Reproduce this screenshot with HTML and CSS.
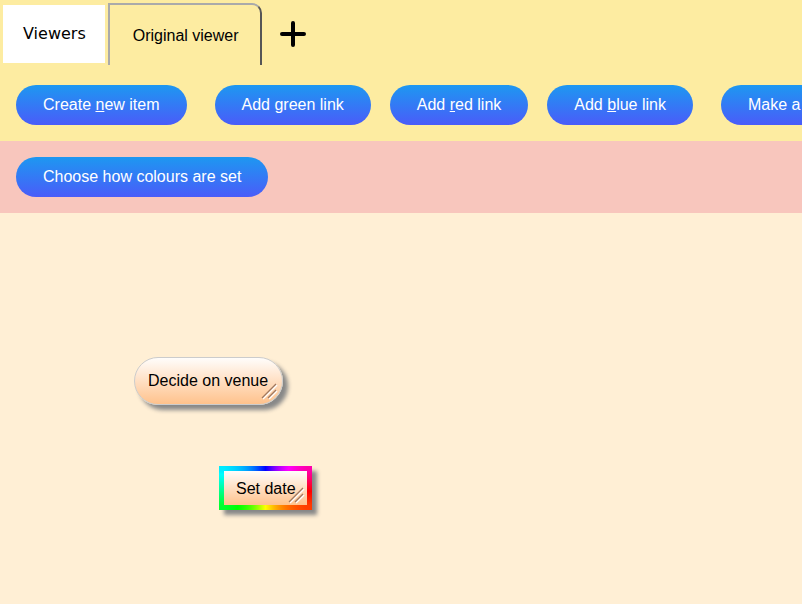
FILE: index.html
```html
<!DOCTYPE html>
<html lang="en">
<head>
    <meta charset="UTF-8">
    <title>Viewers</title>
    <link rel="stylesheet" href="styles.css">
</head>
<body>
    <div class="toolbar">
        <div class="tabs">
            <div class="tab-label">Viewers</div>
            <div class="tab active">Original viewer</div>
            <div class="tab-add">
                <svg width="30" height="30" viewBox="0 0 30 30">
                    <path d="M15 4 V26 M4 15 H26" stroke="#000" stroke-width="4" stroke-linecap="round"/>
                </svg>
            </div>
        </div>
        <div class="button-row">
            <button class="btn first">Create <u>n</u>ew item</button>
            <button class="btn">Add green link</button>
            <button class="btn">Add <u>r</u>ed link</button>
            <button class="btn group-end">Add <u>b</u>lue link</button>
            <button class="btn">Make a copy</button>
        </div>
    </div>
    <div class="colour-bar">
        <button class="btn">Choose how colours are set</button>
    </div>
    <div class="canvas">
        <div class="node pill" style="left: 134px; top: 144px;">
            Decide on venue
            <svg class="grip" width="17" height="17" viewBox="0 0 17 17">
                <path d="M2 16 L16 2 M8 16 L16 8" stroke="#fff" stroke-width="1.5"/>
                <path d="M1 15 L15 1 M7 15 L15 7" stroke="#a07860" stroke-width="1.3"/>
            </svg>
        </div>
        <div class="node rainbow" style="left: 219px; top: 253px;">
            Set date
            <svg class="grip" width="17" height="17" viewBox="0 0 17 17">
                <path d="M2 16 L16 2 M8 16 L16 8" stroke="#fff" stroke-width="1.5"/>
                <path d="M1 15 L15 1 M7 15 L15 7" stroke="#a07860" stroke-width="1.3"/>
            </svg>
        </div>
    </div>
</body>
</html>
```

FILE: styles.css
```css
html, body {
    margin: 0;
    padding: 0;
    height: 100%;
    background-color: #ffefd5; /* papaya canvas */
    font-family: "Liberation Sans", Arial, sans-serif;
    overflow: hidden;
}

/* Top yellow area: tabs + main actions */
.toolbar {
    background-color: #fdeca1;
    height: 141px;
    box-sizing: border-box;
    overflow: hidden;
}

.tabs {
    display: flex;
    align-items: flex-end;
    height: 65px;
    padding-left: 3px;
}

.tab-label {
    background: #fff;
    font-family: "DejaVu Sans", Verdana, sans-serif;
    font-size: 16px;
    height: 58px;
    line-height: 58px;
    padding: 0 19px 0 20px;
    margin-bottom: 2px;
}

.tab {
    height: 62px;
    line-height: 62px;
    box-sizing: border-box;
    padding: 0 21px 0 23px;
    margin-left: 3px;
    font-size: 16px;
    border: 2px outset #aaa;
    border-bottom: none;
    border-top-right-radius: 10px;
}

.tab-add {
    align-self: center;
    margin-left: 16px;
    margin-top: 3px;
    display: flex;
}

.button-row {
    display: flex;
    flex-wrap: nowrap;
    padding: 20px 0 0 16px;
}

.btn {
    flex: none;
    height: 40px;
    padding: 0 27px;
    margin-right: 19px;
    border: none;
    border-radius: 20px;
    background: linear-gradient(#1d98f1, #4a5cf9);
    color: #fff;
    font-family: "Liberation Sans", Arial, sans-serif;
    font-size: 16px;
    white-space: nowrap;
}

.btn.first {
    margin-right: 28px;
}

.btn.group-end {
    margin-right: 28px;
}

.colour-bar {
    background-color: #f8c6bd;
    height: 72px;
    padding: 16px;
    box-sizing: border-box;
}

/* Free canvas where items sit */
.canvas {
    position: relative;
    height: 391px;
}

.node {
    position: absolute;
    box-sizing: border-box;
    font-size: 16px;
    color: #000;
    background: linear-gradient(#fffdfb, #ffc28c);
    box-shadow: 5px 5px 4px #888;
    white-space: nowrap;
}

.node.pill {
    height: 48px;
    line-height: 46px;
    padding: 0 15px 0 13px;
    border: 1px solid #ccc;
    border-radius: 24px;
    width: 149px;
}

.node.rainbow {
    height: 44px;
    line-height: 35px;
    width: 93px;
    padding: 0 11px 0 12px;
    border: 5px solid;
    border-image: conic-gradient(#0000ff, #ff00ff 50deg, #ff0000 95deg, #ffff00 180deg, #00ff00 235deg, #00ffff 290deg, #0000ff) 1;
}

.grip {
    position: absolute;
    right: 4px;
    bottom: 4px;
}

.node.rainbow .grip {
    right: 2px;
    bottom: 1px;
}
```
